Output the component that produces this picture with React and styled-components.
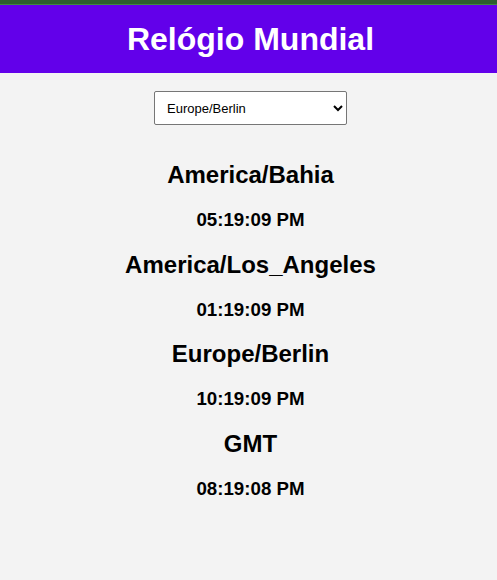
import React, { useState } from 'react';
import styled, { createGlobalStyle } from 'styled-components';

const GlobalStyle = createGlobalStyle`
  html, body {
    margin: 0;
    padding: 0;
    background: #f3f3f3;
    font-family: "Liberation Sans", Arial, sans-serif;
  }
`;

// faixa verde no topo da página
const TopStrip = styled.div`
  height: 4px;
  background: #2e5e2e;
  border-bottom: 1px solid #3f8a3f;
`;

const Header = styled.header`
  height: 68px;
  padding-left: 4px;
  background: #6200ea;
  display: flex;
  align-items: center;
  justify-content: center;
`;

const Title = styled.h1`
  margin: 0;
  color: #ffffff;
  font-size: 32px;
  font-weight: bold;
`;

const Main = styled.main`
  display: flex;
  flex-direction: column;
  align-items: center;
  padding: 18px 0 0 4px;
`;

const Select = styled.select`
  width: 193px;
  height: 34px;
  padding: 0 8px;
  font-family: "Liberation Sans", Arial, sans-serif;
  font-size: 13px;
  color: #000;
  background: #fff;
  border: 1px solid #767676;
  border-radius: 2px;
  margin-bottom: 17px;
`;

const ZoneList = styled.div`
  text-align: center;
`;

const ZoneName = styled.h2`
  margin: 19px 0 20px;
  font-size: 24px;
  line-height: 28px;
  font-weight: bold;
  color: #000;
`;

const ZoneTime = styled.h3`
  margin: 20px 0;
  font-size: 18.72px;
  line-height: 21.5px;
  font-weight: bold;
  color: #000;
`;

const zones = [
  { name: 'America/Bahia', time: '05:19:09 PM' },
  { name: 'America/Los_Angeles', time: '01:19:09 PM' },
  { name: 'Europe/Berlin', time: '10:19:09 PM' },
  { name: 'GMT', time: '08:19:08 PM' },
];

const options = ['America/Bahia', 'America/Los_Angeles', 'Europe/Berlin', 'GMT'];

export default function App() {
  const [selected, setSelected] = useState('Europe/Berlin');

  return (
    <>
      <GlobalStyle />
      <TopStrip />
      <Header>
        <Title>Relógio Mundial</Title>
      </Header>
      <Main>
        <Select value={selected} onChange={(e) => setSelected(e.target.value)}>
          {options.map((o) => (
            <option key={o} value={o}>{o}</option>
          ))}
        </Select>
        <ZoneList>
          {zones.map((z) => (
            <React.Fragment key={z.name}>
              <ZoneName>{z.name}</ZoneName>
              <ZoneTime>{z.time}</ZoneTime>
            </React.Fragment>
          ))}
        </ZoneList>
      </Main>
    </>
  );
}
